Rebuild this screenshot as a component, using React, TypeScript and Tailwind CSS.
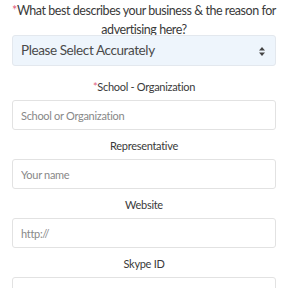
import { useState } from "react";

interface Field {
  label: string;
  required?: boolean;
  placeholder: string;
}

const fields: Field[] = [
  { label: "School - Organization", required: true, placeholder: "School or Organization" },
  { label: "Representative", placeholder: "Your name" },
  { label: "Website", placeholder: "http://" },
  { label: "Skype ID", placeholder: "" },
];

export default function App() {
  const [reason, setReason] = useState("");

  return (
    <div className="h-[288px] w-[288px] overflow-hidden bg-white px-3 font-['Lato',sans-serif]">
      <label className="-mx-1 block pt-[1px] text-center text-[12.5px] leading-[19px] tracking-[-0.45px] text-[#3a3a3a]">
        <span className="text-[#e0607e]">*</span>What best describes your business &amp; the
        reason for advertising here?
      </label>
      <div className="relative mt-[-4px]">
        <select
          className="h-[31px] w-full appearance-none rounded-[3px] border border-[#e3e8ee] bg-[#eef5fc] pl-[8px] text-[13.5px] tracking-[-0.4px] text-[#4a4a4a] outline-none"
          value={reason}
          onChange={(e) => setReason(e.target.value)}
        >
          <option value="">Please Select Accurately</option>
        </select>
        <svg
          className="pointer-events-none absolute right-[11px] top-[12px]"
          width="6"
          height="9"
          viewBox="0 0 6 9"
        >
          <path d="M3 0 L6 3.5 L0 3.5 Z" fill="#444" />
          <path d="M3 9 L6 5.5 L0 5.5 Z" fill="#444" />
        </svg>
      </div>

      {fields.map((f, i) => (
        <div key={f.label} className={i === 0 ? "mt-[13px]" : "mt-[8px]"}>
          <label className="block text-center text-[11px] leading-[16px] tracking-[-0.3px] text-[#3a3a3a]">
            {f.required && <span className="text-[#e0607e]">*</span>}
            {f.label}
          </label>
          <input
            className="mt-[5px] block h-[30px] w-full rounded-[3px] border border-[#e2e2e2] bg-white px-[8px] text-[11px] tracking-[-0.3px] text-[#333] outline-none placeholder:text-[#888]"
            placeholder={f.placeholder}
          />
        </div>
      ))}
    </div>
  );
}
